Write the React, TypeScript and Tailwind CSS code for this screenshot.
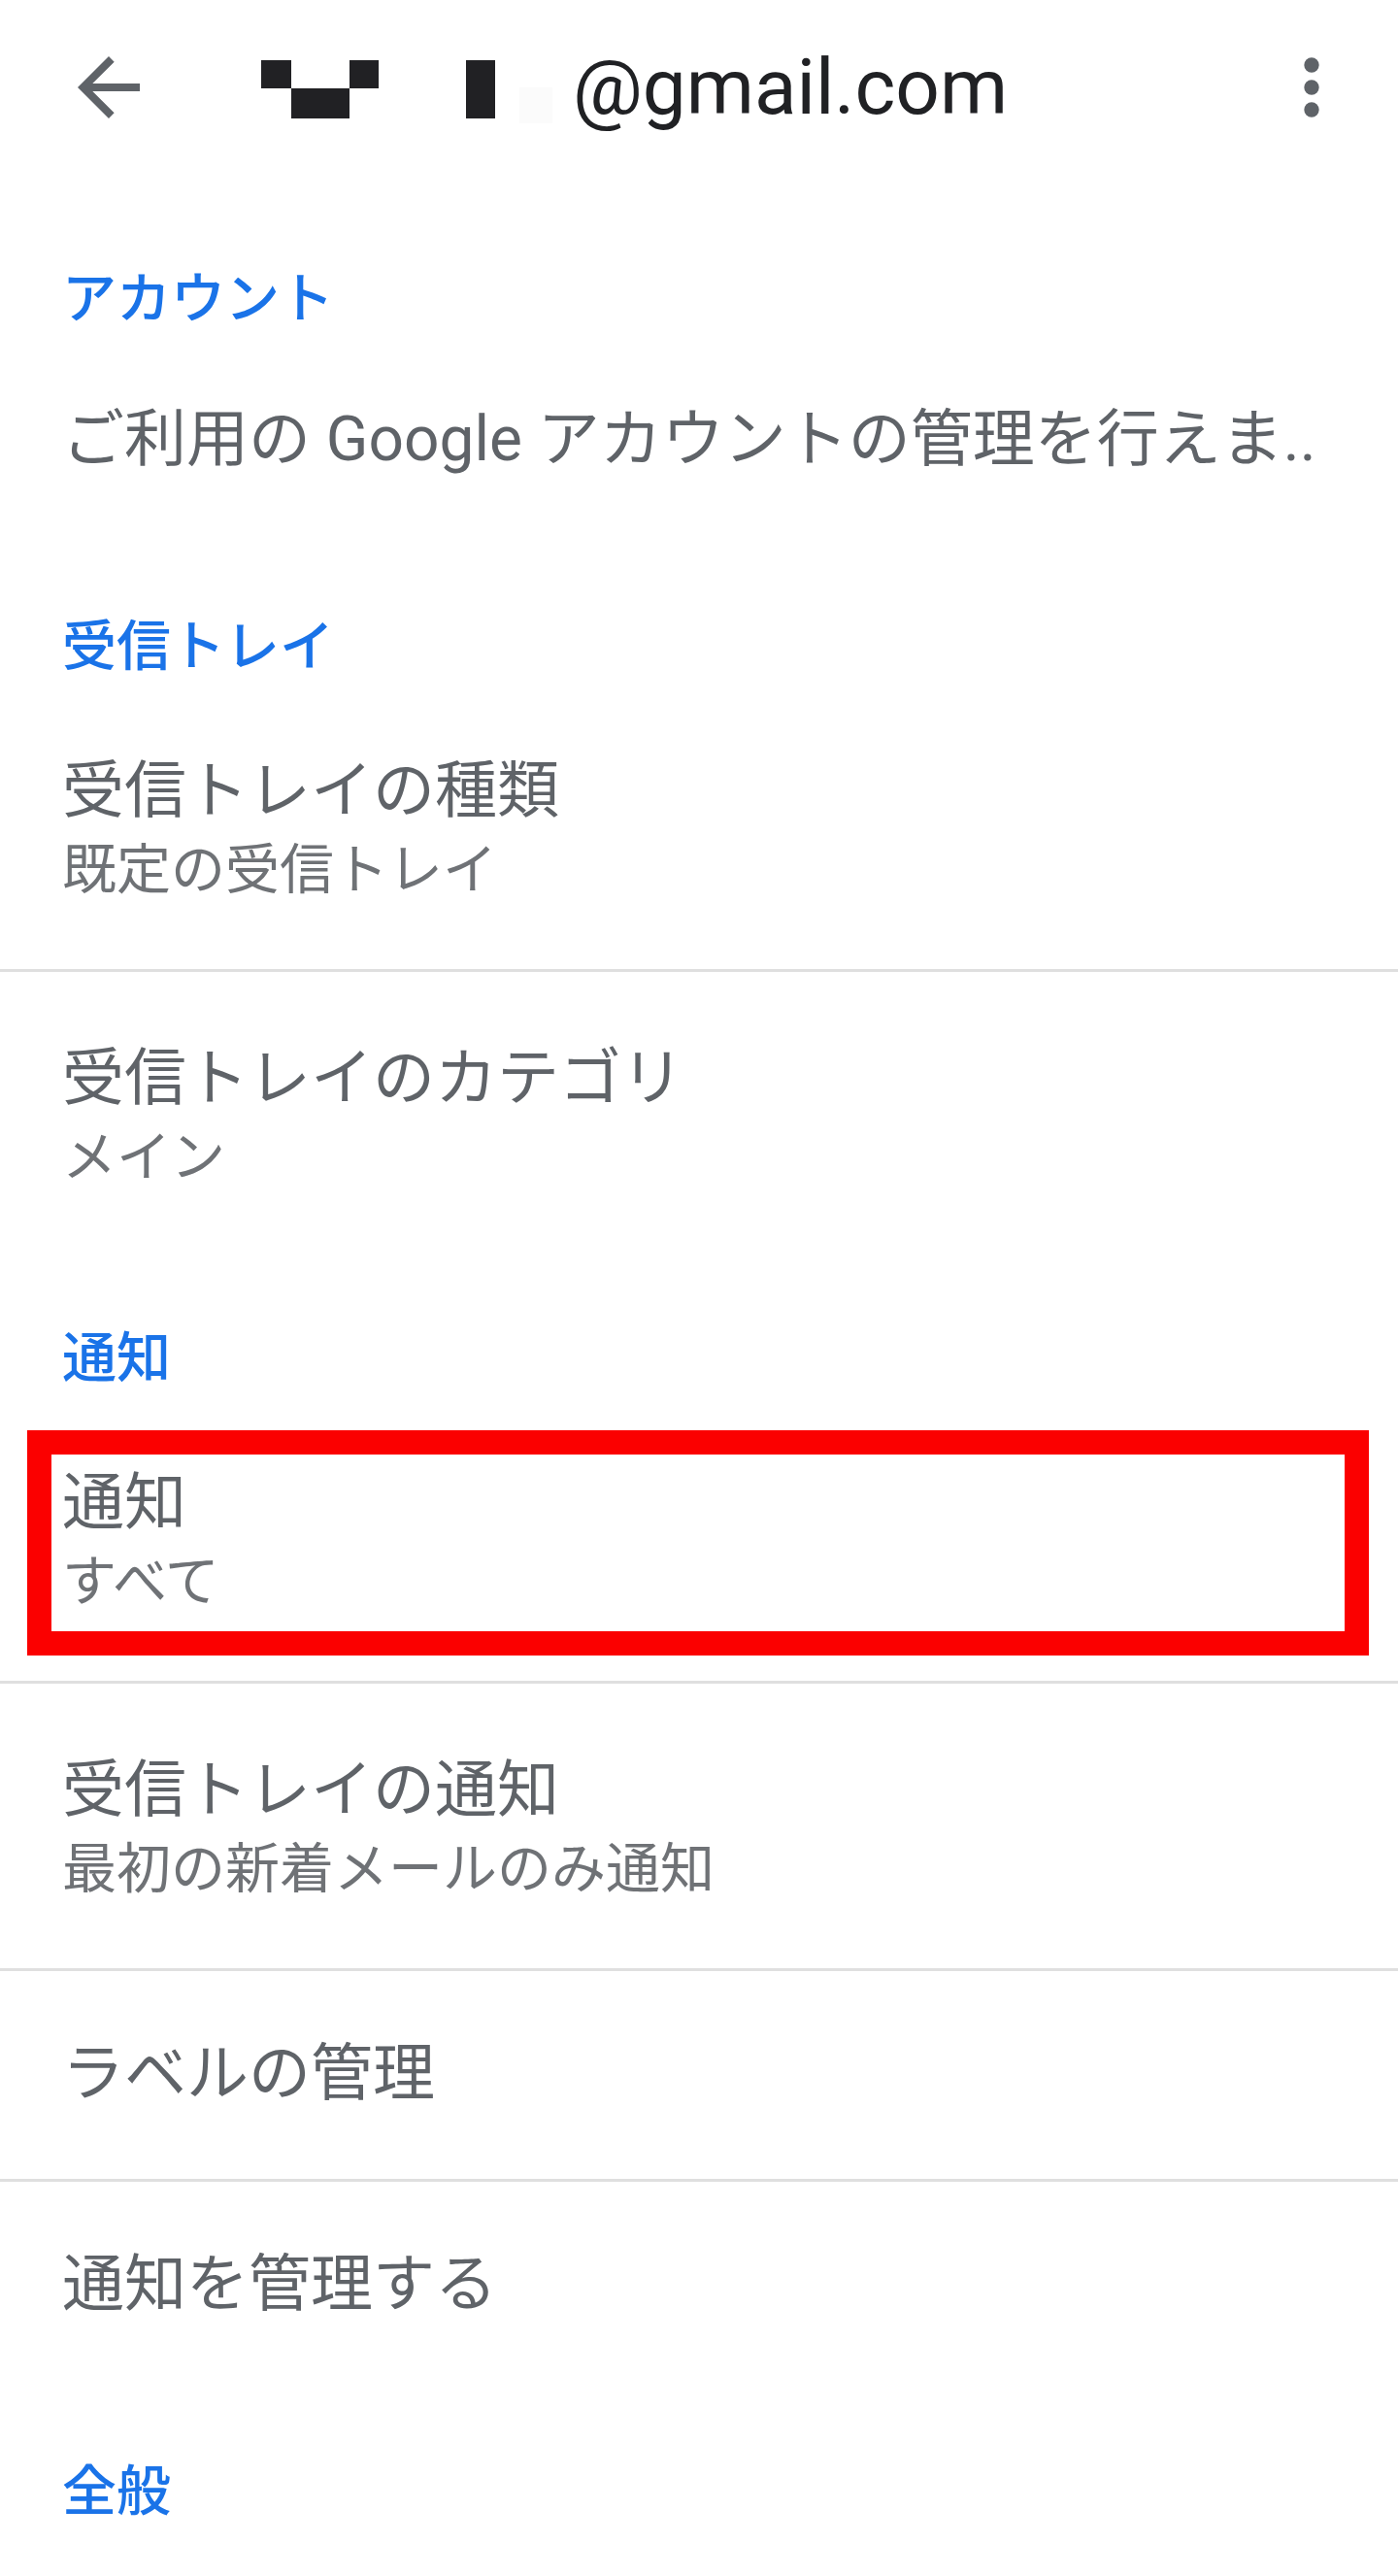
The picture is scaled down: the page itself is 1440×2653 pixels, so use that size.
import React from "react";

const font = "font-['Roboto','Noto_Sans_CJK_JP',sans-serif]";

// Category heading in blue
function Category({ label, className = "pt-[73px]" }: { label: string; className?: string }) {
  return (
    <div className={`pl-[64px] pb-[7px] ${className}`}>
      <h2 className="text-[56px] leading-[64px] font-medium text-[#1a73e8]">{label}</h2>
    </div>
  );
}

interface ItemProps {
  title: string;
  sub?: string;
  divider?: boolean;
  highlight?: boolean;
}

function Item({ title, sub, divider, highlight }: ItemProps) {
  return (
    <>
      <div
        className={`relative pl-[64px] pr-[40px] ${
          sub ? "pt-[68px] pb-[63px]" : "pt-[64px] pb-[66px]"
        }`}
      >
        <p className="text-[64px] leading-[84px] text-[#5f6368] whitespace-nowrap">{title}</p>
        {sub && <p className="text-[56px] leading-[78px] text-[#6f7276] whitespace-nowrap">{sub}</p>}
        {highlight && (
          <div className="absolute left-[28px] right-[30px] top-[35px] bottom-[26px] border-[25px] border-[#fb0000]" />
        )}
      </div>
      {divider && <div className="h-[3px] bg-[#dfdfdf]" />}
    </>
  );
}

export default function App() {
  return (
    <div className={`w-[1440px] min-h-[2653px] bg-white ${font}`}>
      {/* Header */}
      <div className="flex items-center h-[180px] pl-[64px] pr-[43px]">
        <svg width="96" height="96" viewBox="0 0 24 24" fill="#5f6368">
          <path d="M20 11H7.83l5.59-5.59L12 4l-8 8 8 8 1.41-1.41L7.83 13H20v-2z" />
        </svg>

        {/* redacted name */}
        <div className="ml-[109px] mt-[4px] flex flex-col w-[121px]">
          <div className="flex h-[29px]">
            <div className="w-[31px] bg-[#212124]" />
            <div className="w-[60px]" />
            <div className="w-[30px] bg-[#212124]" />
          </div>
          <div className="flex h-[31px]">
            <div className="ml-[31px] w-[60px] bg-[#212124]" />
          </div>
        </div>
        <div className="ml-[90px] mt-[4px] w-[30px] h-[60px] bg-[#212124]" />
        <div className="ml-[25px] mt-[37px] w-[34px] h-[37px] bg-[#fbfbfb]" />
        <span className="ml-[21px] text-[80px] leading-[80px] text-[#202124] font-['Roboto',sans-serif]">
          @gmail.com
        </span>

        <div className="flex-1" />
        <svg width="92" height="92" viewBox="0 0 24 24" fill="#5f6368">
          <circle cx="12" cy="6" r="2" />
          <circle cx="12" cy="12" r="2" />
          <circle cx="12" cy="18" r="2" />
        </svg>
      </div>

      <Category label="アカウント" className="pt-[96px]" />
      <Item title="ご利用の Google アカウントの管理を行えま.." />

      <Category label="受信トレイ" />
      <Item title="受信トレイの種類" sub="既定の受信トレイ" divider />
      <Item title="受信トレイのカテゴリ" sub="メイン" />

      <Category label="通知" />
      <Item title="通知" sub="すべて" divider highlight />
      <Item title="受信トレイの通知" sub="最初の新着メールのみ通知" divider />
      <Item title="ラベルの管理" divider />
      <Item title="通知を管理する" />

      <Category label="全般" />
    </div>
  );
}
